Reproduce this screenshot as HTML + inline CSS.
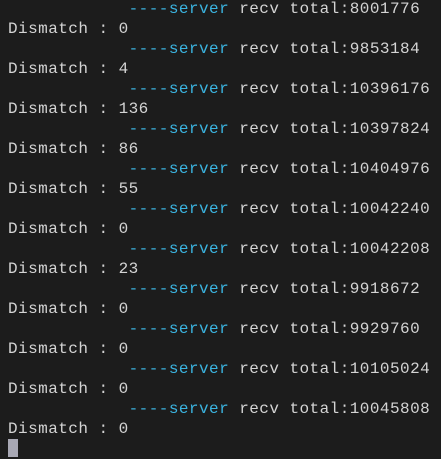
<!DOCTYPE html><html><head><style>
body{margin:0;width:441px;height:457px;background:#1c1c1c;overflow:hidden}
pre{margin:0;padding:0 0 0 8px;position:relative;top:-1px;font-family:"Liberation Mono",monospace;font-size:16px;line-height:20px;color:#d4d4d4;letter-spacing:0.45px}
.c{color:#3bb4e0}
.cur{display:inline-block;width:10px;height:18px;background:#a8a8b4;vertical-align:-4px}
</style></head><body><pre>            <span class="c">----server</span> recv total:8001776
Dismatch : 0
            <span class="c">----server</span> recv total:9853184
Dismatch : 4
            <span class="c">----server</span> recv total:10396176
Dismatch : 136
            <span class="c">----server</span> recv total:10397824
Dismatch : 86
            <span class="c">----server</span> recv total:10404976
Dismatch : 55
            <span class="c">----server</span> recv total:10042240
Dismatch : 0
            <span class="c">----server</span> recv total:10042208
Dismatch : 23
            <span class="c">----server</span> recv total:9918672
Dismatch : 0
            <span class="c">----server</span> recv total:9929760
Dismatch : 0
            <span class="c">----server</span> recv total:10105024
Dismatch : 0
            <span class="c">----server</span> recv total:10045808
Dismatch : 0
<span class="cur"></span></pre></body></html>
